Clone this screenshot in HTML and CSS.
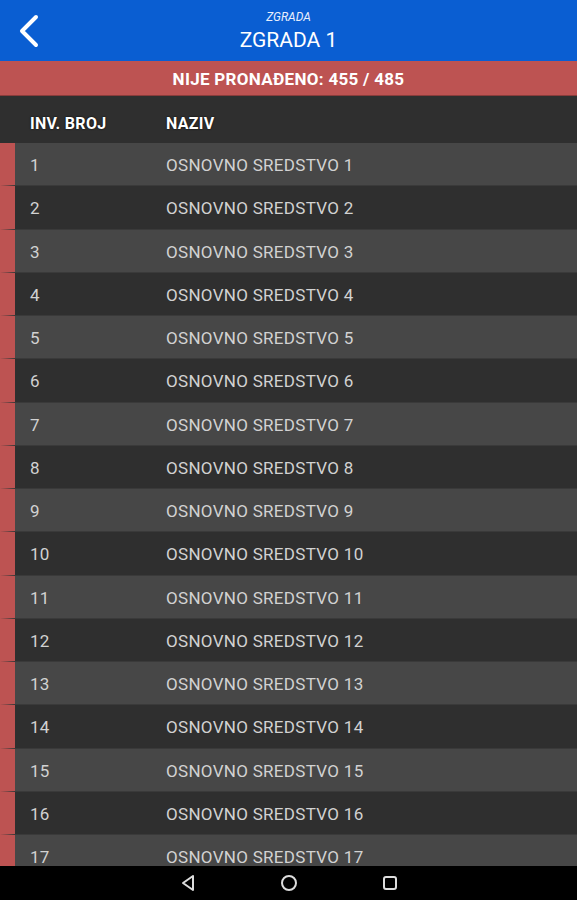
FILE: index.html
```html
<!DOCTYPE html>
<html lang="hr">
<head>
    <meta charset="UTF-8">
    <meta name="viewport" content="width=device-width, initial-scale=1.0">
    <title>Zgrada 1</title>
    <link rel="stylesheet" href="styles.css">
</head>
<body>
    <div class="screen">
        <header class="topbar">
            <button class="back" aria-label="Natrag">
                <svg width="24" height="34" viewBox="0 0 24 34">
                    <polyline points="19,3 5,17 19,31" fill="none" stroke="#fff" stroke-width="4" stroke-linecap="round" stroke-linejoin="round"/>
                </svg>
            </button>
            <div class="titles">
                <div class="subtitle">ZGRADA</div>
                <div class="title">ZGRADA 1</div>
            </div>
        </header>
        <div class="status">NIJE PRONAĐENO: 455 / 485</div>
        <div class="table-head">
            <span class="col-num">INV. BROJ</span>
            <span class="col-name">NAZIV</span>
        </div>
        <div class="list" id="list"></div>
        <nav class="navbar">
            <svg width="16" height="18" viewBox="0 0 16 18"><polygon points="13,2 3,9 13,16" fill="none" stroke="#ddd" stroke-width="2" stroke-linejoin="round"/></svg>
            <svg width="18" height="18" viewBox="0 0 18 18"><circle cx="9" cy="9" r="7" fill="none" stroke="#ddd" stroke-width="2"/></svg>
            <svg width="16" height="16" viewBox="0 0 16 16"><rect x="2" y="2" width="12" height="12" rx="2" fill="none" stroke="#ddd" stroke-width="2"/></svg>
        </nav>
    </div>

    <script>
        const list = document.getElementById("list");
        for (let i = 1; i <= 17; i++) {
            const row = document.createElement("div");
            row.className = "row" + (i % 2 === 0 ? " even" : "");
            row.innerHTML = '<span class="col-num">' + i + '</span><span class="col-name">OSNOVNO SREDSTVO ' + i + '</span>';
            list.appendChild(row);
        }
    </script>
</body>
</html>
```

FILE: styles.css
```css
body {
    margin: 0;
    font-family: Roboto, "Noto Sans", Arial, sans-serif;
    background-color: #000;
}
.screen {
    width: 577px;
    height: 900px;
    display: flex;
    flex-direction: column;
    overflow: hidden;
}
.topbar {
    height: 61px;
    flex-shrink: 0;
    background-color: #0a5ed2;
    display: flex;
    align-items: center;
    position: relative;
}
.back {
    background: none;
    border: none;
    padding: 0;
    margin-left: 17px;
    display: flex;
    z-index: 1;
}
.titles {
    position: absolute;
    left: 0;
    right: 0;
    top: 10px;
    text-align: center;
    color: #fff;
}
.subtitle {
    font-size: 12px;
    font-style: italic;
    line-height: 14px;
    color: #e8eefc;
}
.title {
    font-size: 21px;
    line-height: 26px;
    margin-top: 3px;
}
.status {
    height: 35px;
    flex-shrink: 0;
    background-color: #bd5352;
    color: #fff;
    font-weight: bold;
    font-size: 17px;
    letter-spacing: 0.3px;
    display: flex;
    align-items: center;
    justify-content: center;
    padding-top: 2px;
    box-sizing: border-box;
    border-bottom: 1px solid #8a3c3b;
}
.table-head {
    height: 47px;
    flex-shrink: 0;
    background-color: #2f2f2f;
    color: #fff;
    font-weight: bold;
    font-size: 16px;
    letter-spacing: 0.3px;
    display: flex;
    align-items: center;
    padding-left: 30px;
    padding-top: 8px;
    box-sizing: border-box;
    text-shadow: 0 0 2px #000;
}
.col-num {
    width: 136px;
}
.list {
    flex: 1;
    overflow: hidden;
    background-color: #2f2f2f;
}
.row {
    height: 43.25px;
    box-sizing: border-box;
    display: flex;
    align-items: center;
    padding-left: 15px;
    padding-top: 2px;
    background-color: #474747;
    border-left: 15px solid #bd5352;
    border-bottom: 1px solid #3a3a3a;
    color: #d2d2d2;
    font-size: 17px;
    letter-spacing: 0.3px;
}
.row.even {
    background-color: #2f2f2f;
}
.navbar {
    height: 34px;
    flex-shrink: 0;
    background-color: #000;
    display: flex;
    align-items: center;
    justify-content: center;
    gap: 84px;
}
```
